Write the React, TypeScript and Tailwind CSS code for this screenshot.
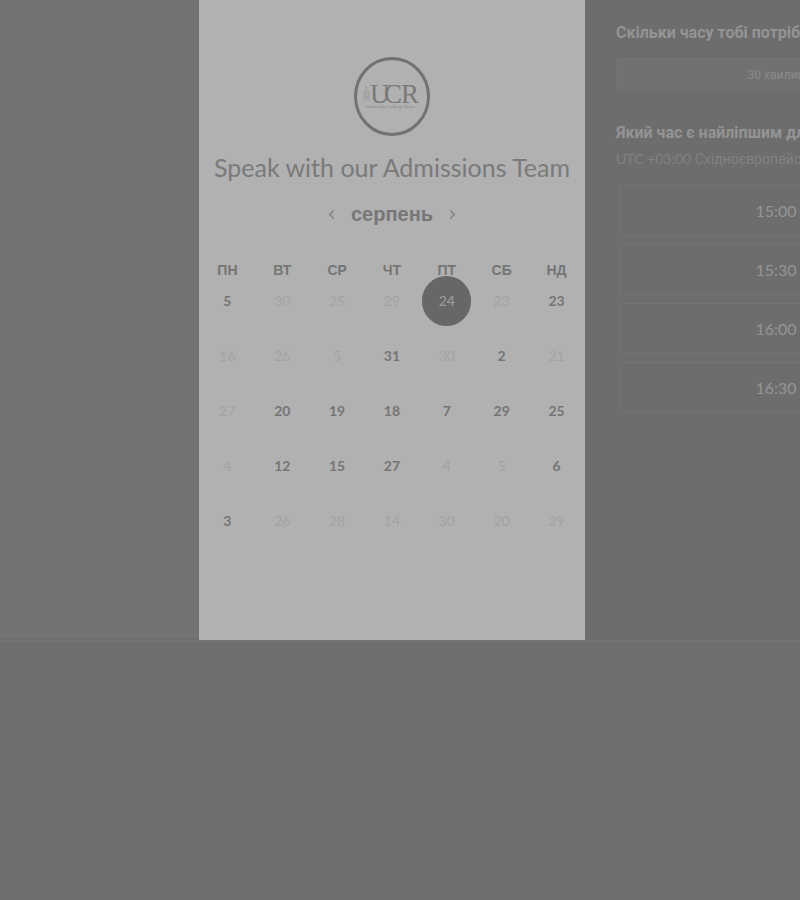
import { ChevronLeft, ChevronRight } from "lucide-react";

type Day = { label: string; state: "open" | "off" | "selected" };

const open = (label: string): Day => ({ label, state: "open" });
const off = (label: string): Day => ({ label, state: "off" });
const selected = (label: string): Day => ({ label, state: "selected" });

const weekdays = ["ПН", "ВТ", "СР", "ЧТ", "ПТ", "СБ", "НД"];

const weeks: Day[][] = [
  [open("5"), off("30"), off("25"), off("29"), selected("24"), off("23"), open("23")],
  [off("16"), off("26"), off("5"), open("31"), off("30"), open("2"), off("21")],
  [off("27"), open("20"), open("19"), open("18"), open("7"), open("29"), open("25")],
  [off("4"), open("12"), open("15"), open("27"), off("4"), off("5"), open("6")],
  [open("3"), off("26"), off("28"), off("14"), off("30"), off("20"), off("29")],
];

const times = ["15:00", "15:30", "16:00", "16:30"];

const dayStyles = {
  open: "font-bold text-[#757575]",
  off: "text-[#a3a3a3]",
  selected: "bg-[#676767] text-[#9f9f9f]",
};

function Logo() {
  return (
    <svg viewBox="0 0 78 80" className="h-20 w-[78px]" role="img" aria-label="UCR">
      <ellipse cx="39" cy="40.500" rx="36.500" ry="38" fill="none" stroke="#727272" strokeWidth="3" />
      <g stroke="#9c9c9c" strokeWidth="1" fill="none">
        <path d="M11 45V35h5v10M13.500 35v-5M11 38h5M11 41h5M13.500 36v9" />
      </g>
      <g fontFamily="'Liberation Serif', serif" fontSize="27" fill="#797979">
        <text x="17" y="47">U</text>
        <text x="31" y="47">C</text>
        <text x="48" y="47">R</text>
      </g>
      <text x="12" y="52" fontFamily="'Liberation Serif', serif" fontSize="5" fill="#858585">
        University College Roos.
      </text>
    </svg>
  );
}

function Calendar() {
  return (
    <table className="w-full table-fixed border-collapse text-center">
      <thead>
        <tr className="font-['Liberation_Sans',sans-serif] text-sm text-[#757575]">
          {weekdays.map((name) => (
            <th key={name} scope="col" className="p-0 font-bold">
              <div className="h-[11px] leading-4">{name}</div>
            </th>
          ))}
        </tr>
      </thead>
      <tbody>
        {weeks.map((week, i) => (
          <tr key={i} className="h-[55px]">
            {week.map((day, j) => (
              <td key={j} className="p-0">
                <button
                  type="button"
                  disabled={day.state === "off"}
                  className={`relative mx-auto flex h-[50px] w-[49px] items-center justify-center rounded-full text-sm ${dayStyles[day.state]}`}
                >
                  {day.label}
                </button>
              </td>
            ))}
          </tr>
        ))}
      </tbody>
    </table>
  );
}

export default function App() {
  return (
    <div className="min-h-screen overflow-hidden bg-[#6f6f6f] font-[Lato,'Liberation_Sans',sans-serif]">
      <div className="grid min-h-[642px] grid-cols-[199px_386px_minmax(0,1fr)] border-b-2 border-[#737373]">
        <div className="border-b-2 border-[#6d6d6d] bg-[#737373]" />

        <main className="bg-[#b1b1b1] px-px pt-14">
          <div className="flex justify-center">
            <Logo />
          </div>
          <h1 className="mt-[15px] text-center text-[25px] leading-8 whitespace-nowrap text-[#7a7a7a]">
            Speak with our Admissions Team
          </h1>
          <div className="mt-[17px] mb-[34px] flex items-center justify-center gap-3 text-[#7f7f7f]">
            <button type="button" aria-label="Попередній місяць">
              <ChevronLeft size={15} />
            </button>
            <h2 className="font-['Liberation_Sans',sans-serif] text-xl leading-7 font-bold text-[#777777]">
              серпень
            </h2>
            <button type="button" aria-label="Наступний місяць">
              <ChevronRight size={15} />
            </button>
          </div>
          <Calendar />
        </main>

        <aside className="overflow-hidden bg-[#6d6d6d]">
          <div className="w-[382px] px-[31px] pt-[21px]">
            <h3 className="font-[Roboto,'Liberation_Sans',sans-serif] text-base leading-6 font-bold text-[#949494]">
              Скільки часу тобі потрібно?
            </h3>
            <button
              type="button"
              className="mt-[13px] h-[33px] w-full rounded-xs border border-[#747474] bg-[#717171] font-[Roboto,'Liberation_Sans',sans-serif] text-xs text-[#8b8b8b]"
            >
              30 хвилин
            </button>
            <h3 className="mt-[30px] font-[Roboto,'Liberation_Sans',sans-serif] text-base leading-6 font-bold text-[#949494]">
              Який час є найліпшим для тебе?
            </h3>
            <p className="mt-1 text-sm leading-5 whitespace-nowrap text-[#828282]">
              UTC +03:00{" "}
              <span className="font-[Roboto,'Liberation_Sans',sans-serif]">Східноєвропейський час</span>
            </p>
            <div className="mt-4 flex flex-col gap-2 px-1">
              {times.map((time) => (
                <button
                  key={time}
                  type="button"
                  className="h-[51px] rounded-xs border border-[#757575] text-base text-[#959595]"
                >
                  {time}
                </button>
              ))}
            </div>
          </div>
        </aside>
      </div>
    </div>
  );
}
